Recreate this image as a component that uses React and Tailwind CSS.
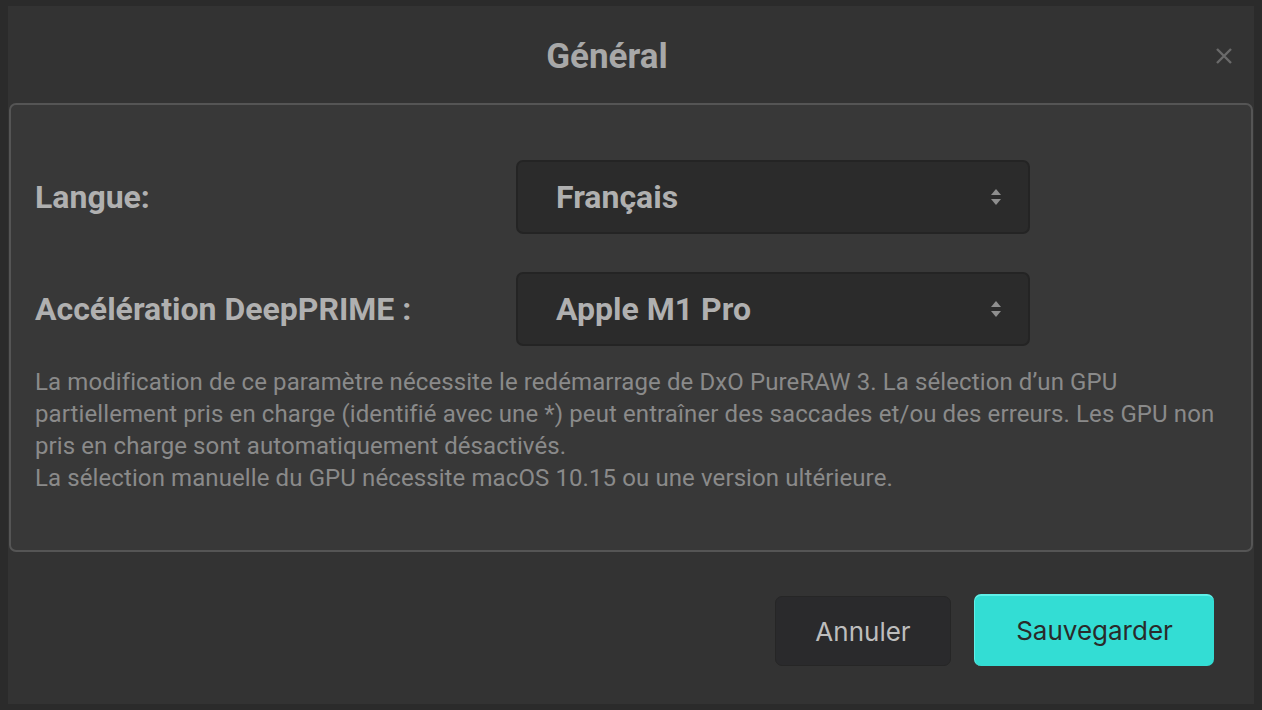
import React from "react";

function Chevrons() {
  return (
    <svg width="12" height="22" viewBox="0 0 12 22" className="shrink-0">
      <path d="M6 3 L11 9 L1 9 Z" fill="#8e8e8e" />
      <path d="M1 13 L11 13 L6 19 Z" fill="#8e8e8e" />
    </svg>
  );
}

function Select({ value }) {
  return (
    <div className="w-[514px] h-[74px] rounded-[7px] bg-[#2b2b2b] border-2 border-[#242424] flex items-center justify-between pl-[38px] pr-[26px]">
      <span className="text-[32px] font-bold text-[#b0b0b0]">{value}</span>
      <Chevrons />
    </div>
  );
}

export default function App() {
  return (
    <div
      className="w-[1262px] h-[710px] bg-[#2b2b2b] pt-[6px] pl-[8px]"
      style={{ fontFamily: "Roboto, 'Noto Sans', sans-serif" }}
    >
      <div className="w-[1246px] h-[698px] bg-[#333333] flex flex-col">
        <div className="relative h-[97px] flex items-center justify-center pr-[48px]">
          <span className="text-[35px] font-bold text-[#a8a8a8] mt-[5px]">Général</span>
          <svg
            className="absolute right-[21px] top-[41px]"
            width="18"
            height="18"
            viewBox="0 0 18 18"
          >
            <path d="M2 2 L16 16 M16 2 L2 16" stroke="#6a6a6a" strokeWidth="2.4" />
          </svg>
        </div>
        <div className="mx-px h-[449px] rounded-[7px] border-2 border-[#555555] bg-[#383838] pt-[55px] pl-[24px]">
          <div className="flex items-center">
            <span className="w-[481px] text-[32px] font-bold text-[#b0b0b0]">Langue:</span>
            <Select value="Français" />
          </div>
          <div className="flex items-center mt-[38px]">
            <span className="w-[481px] text-[32px] font-bold text-[#b0b0b0]">Accélération DeepPRIME :</span>
            <Select value="Apple M1 Pro" />
          </div>
          <div className="mt-[20px] text-[24px] leading-[32px] tracking-[0.1px] text-[#8a8a8a] whitespace-nowrap">
            <div>La modification de ce paramètre nécessite le redémarrage de DxO PureRAW 3. La sélection d’un GPU</div>
            <div>partiellement pris en charge (identifié avec une *) peut entraîner des saccades et/ou des erreurs. Les GPU non</div>
            <div>pris en charge sont automatiquement désactivés.</div>
            <div>La sélection manuelle du GPU nécessite macOS 10.15 ou une version ultérieure.</div>
          </div>
        </div>
        <div className="flex justify-end items-center gap-[23px] pr-[40px] pt-[41px]">
          <button
            className="w-[176px] h-[70px] rounded-[7px] bg-[#2a2a2c] border border-[#262626] text-[26px] text-[#bdbdbd] mt-[3px]"
            style={{ fontFamily: "Inter, 'Liberation Sans', sans-serif" }}
          >
            Annuler
          </button>
          <button
            className="w-[240px] h-[72px] rounded-[7px] bg-[#33ddd4] border-t-2 border-l border-[#5ff0e8] text-[26px] text-[#2a2a2a]"
            style={{ fontFamily: "Inter, 'Liberation Sans', sans-serif" }}
          >
            Sauvegarder
          </button>
        </div>
      </div>
    </div>
  );
}
